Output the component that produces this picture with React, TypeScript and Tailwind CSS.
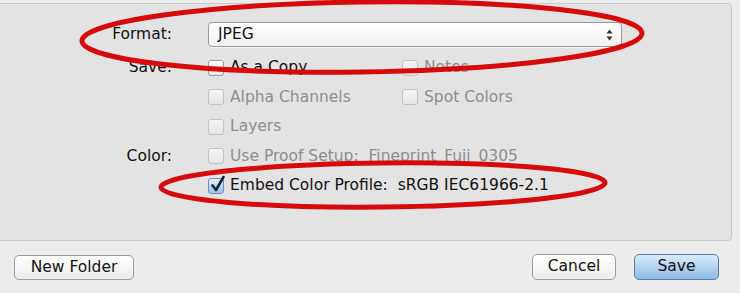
import React from "react";

const font = { fontFamily: '"DejaVu Sans", "Liberation Sans", sans-serif' };

function Box({ checked, disabled }: { checked?: boolean; disabled?: boolean }) {
    if (checked) {
        return (
            <span className="relative w-[16px] h-[16px] rounded-[3px] border border-[#6f8fb5] bg-gradient-to-b from-[#e3f0fc] to-[#9cc3ea] shrink-0">
                <svg className="absolute left-[1px] top-[-4px]" width="16" height="18" viewBox="0 0 16 18">
                    <path d="M2.5 10.5 L6 15 L13.5 2" fill="none" stroke="#1b2536" strokeWidth="2.6" strokeLinecap="round" strokeLinejoin="round" />
                </svg>
            </span>
        );
    }
    return (
        <span
            className={`w-[16px] h-[16px] rounded-[3px] border shrink-0 bg-gradient-to-b ${
                disabled ? "border-[#c2c2c2] from-[#f4f4f4] to-[#e6e6e6]" : "border-[#9a9a9a] from-[#ffffff] to-[#e9e9e9]"
            }`}
        />
    );
}

function Check({ label, checked, disabled }: { label: string; checked?: boolean; disabled?: boolean }) {
    return (
        <div className="flex items-center gap-[6px]">
            <Box checked={checked} disabled={disabled} />
            <span className={`text-[15.5px] whitespace-pre ${disabled ? "text-[#8e8e8e]" : "text-[#111]"}`}>{label}</span>
        </div>
    );
}

function Row({ label, children }: { label?: string; children: React.ReactNode }) {
    return (
        <div className="flex items-center h-[29.5px]">
            <div className="w-[176px] text-right text-[15.5px] text-[#111]">{label}</div>
            <div className="ml-[36px] grid grid-cols-[194px_auto] items-center">{children}</div>
        </div>
    );
}

export default function App() {
    return (
        <div className="relative w-[740px] h-[293px] overflow-hidden bg-[#ececec]" style={font}>
            <section className="mt-[3px] ml-[-5px] w-[737px] h-[238px] rounded-[4px] border border-[#c9c9c9] bg-[#e3e3e3] pt-[18px]">
                <div className="flex items-center h-[25px]">
                    <div className="w-[176px] text-right text-[15.5px] text-[#111]">Format:</div>
                    <div className="ml-[36px] w-[414px] h-[25px] rounded-[4px] border border-[#9b9b9b] bg-gradient-to-b from-[#ffffff] to-[#f1f1f1] flex items-center justify-between pl-[9px] pr-[8px] shadow-[0_1px_0_rgba(255,255,255,0.6)]">
                        <span className="text-[15.5px] text-[#111]">JPEG</span>
                        <svg width="7" height="12" viewBox="0 0 7 12">
                            <path d="M3.5 0.5 L6.5 4.5 L0.5 4.5 Z" fill="#333" />
                            <path d="M3.5 11.5 L6.5 7.5 L0.5 7.5 Z" fill="#333" />
                        </svg>
                    </div>
                </div>
                <div className="h-[6px]" />
                <Row label="Save:">
                    <Check label="As a Copy" />
                    <Check label="Notes" disabled />
                </Row>
                <Row>
                    <Check label="Alpha Channels" disabled />
                    <Check label="Spot Colors" disabled />
                </Row>
                <Row>
                    <Check label="Layers" disabled />
                </Row>
                <Row label="Color:">
                    <Check label="Use Proof Setup:  Fineprint_Fuji_0305" disabled />
                </Row>
                <Row>
                    <Check label="Embed Color Profile:  sRGB IEC61966-2.1" checked />
                </Row>
            </section>

            <footer className="flex items-center justify-between h-[52px] pl-[14px] pr-[21px]">
                <button className="w-[120px] h-[25px] rounded-[5px] border border-[#9c9c9c] bg-gradient-to-b from-[#ffffff] to-[#ececec] text-[15.5px] text-[#111]">
                    New Folder
                </button>
                <div className="flex items-center gap-[18px]">
                    <button className="w-[84px] h-[26px] rounded-[5px] border border-[#9c9c9c] bg-gradient-to-b from-[#ffffff] to-[#ececec] text-[15.5px] text-[#111]">
                        Cancel
                    </button>
                    <button className="w-[85px] h-[26px] rounded-[5px] border border-[#5b7ea9] bg-gradient-to-b from-[#d9eafb] to-[#8fbbe6] text-[15.5px] text-[#111]">
                        Save
                    </button>
                </div>
            </footer>

            <svg className="absolute inset-0 pointer-events-none" width="740" height="293" viewBox="0 0 740 293">
                <ellipse cx="362" cy="37" rx="280" ry="35" transform="rotate(-0.8 362 37)" fill="none" stroke="#d60a0a" strokeWidth="5" />
                <ellipse cx="383" cy="185" rx="222" ry="22" transform="rotate(-0.6 383 185)" fill="none" stroke="#d60a0a" strokeWidth="5" />
            </svg>
        </div>
    );
}
